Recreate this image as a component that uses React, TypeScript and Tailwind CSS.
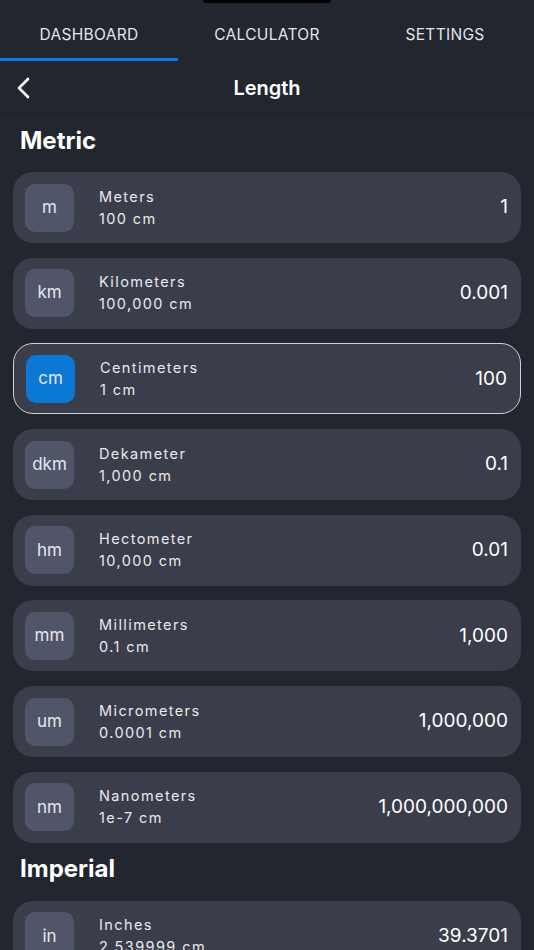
import * as React from "react";

interface IUnit {
  abbr: string;
  name: string;
  sub: string;
  value: string;
  active?: boolean;
}

const metric: IUnit[] = [
  { abbr: "m", name: "Meters", sub: "100 cm", value: "1" },
  { abbr: "km", name: "Kilometers", sub: "100,000 cm", value: "0.001" },
  { abbr: "cm", name: "Centimeters", sub: "1 cm", value: "100", active: true },
  { abbr: "dkm", name: "Dekameter", sub: "1,000 cm", value: "0.1" },
  { abbr: "hm", name: "Hectometer", sub: "10,000 cm", value: "0.01" },
  { abbr: "mm", name: "Millimeters", sub: "0.1 cm", value: "1,000" },
  { abbr: "um", name: "Micrometers", sub: "0.0001 cm", value: "1,000,000" },
  { abbr: "nm", name: "Nanometers", sub: "1e-7 cm", value: "1,000,000,000" },
];

const imperial: IUnit[] = [
  { abbr: "in", name: "Inches", sub: "2.539999 cm", value: "39.3701" },
  { abbr: "ft", name: "Feet", sub: "30.48 cm", value: "3.28084" },
];

const UnitRow: React.FC<{ unit: IUnit }> = ({ unit }) => (
  <div
    className={`flex flex-row items-center h-[71px] rounded-[20px] bg-[#3a3d4a] pl-3 pr-[13px] ${
      unit.active ? "border-[1.5px] border-[#cfd0d4]" : ""
    }`}
  >
    <div
      className={`w-[49px] h-[48px] rounded-[10px] flex items-center justify-center text-[17px] text-[#e6e7ea] ${
        unit.active ? "bg-[#0b79d3]" : "bg-[#50556a]"
      }`}
    >
      {unit.abbr}
    </div>
    <div className="flex flex-col ml-[25px] text-[#e9e9ec] text-[14.5px] tracking-[1.4px] leading-[22px]">
      <p>{unit.name}</p>
      <p>{unit.sub}</p>
    </div>
    <p className="ml-auto text-[19px] text-white">{unit.value}</p>
  </div>
);

const App: React.FC = () => {
  const tabs = ["DASHBOARD", "CALCULATOR", "SETTINGS"];

  return (
    <div
      className="relative w-[534px] h-[950px] overflow-hidden bg-[#22262e]"
      style={{ fontFamily: "Inter, 'Noto Sans', sans-serif" }}
    >
      <div className="absolute top-0 left-[203px] w-[128px] h-[3px] bg-black rounded-b-full" />

      <div className="grid grid-cols-3 h-[62px]">
        {tabs.map((t, i) => (
          <div key={t} className="flex flex-col items-center justify-between">
            <p className="mt-[23px] text-[15.5px] text-[#e4e5e8] tracking-[0.3px]">{t}</p>
            <div className={`w-full h-[3px] mb-px ${i === 0 ? "bg-[#1673e2]" : ""}`} />
          </div>
        ))}
      </div>

      <div className="relative flex items-center justify-center h-[52px] border-b border-[#1b1e24]">
        <svg
          className="absolute left-[15px] top-[15px]"
          width="18"
          height="22"
          viewBox="0 0 18 22"
          fill="none"
          stroke="white"
          strokeWidth="2.6"
          strokeLinecap="round"
          strokeLinejoin="round"
        >
          <path d="M13 2 L4 11 L13 20" />
        </svg>
        <p className="text-[20px] font-semibold text-white">Length</p>
      </div>

      <div className="px-[13px]">
        <h2 className="pt-3 pl-[7px] text-[24px] leading-[30px] font-bold text-white">Metric</h2>
        <div className="flex flex-col gap-[14.7px] mt-4">
          {metric.map((u) => (
            <UnitRow key={u.abbr} unit={u} />
          ))}
        </div>
        <h2 className="mt-[11px] pl-[7px] text-[24px] leading-[30px] font-bold text-white">Imperial</h2>
        <div className="flex flex-col gap-[14.7px] mt-[17px]">
          {imperial.map((u) => (
            <UnitRow key={u.abbr} unit={u} />
          ))}
        </div>
      </div>
    </div>
  );
};

export default App;
